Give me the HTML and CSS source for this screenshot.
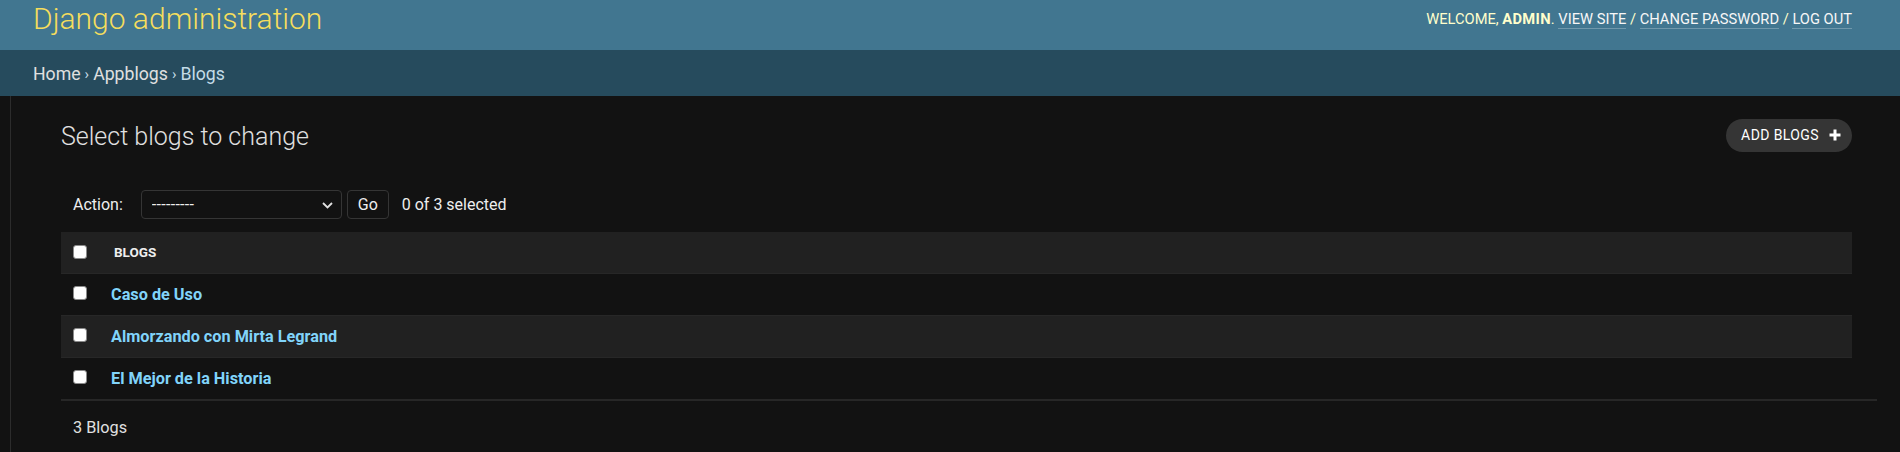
FILE: index.html
```html
<!DOCTYPE html>
<html lang="en">
<head>
<meta charset="utf-8">
<title>Select blogs to change | Django site admin</title>
<link rel="stylesheet" href="styles.css">
</head>
<body>
<header class="site-header">
  <h1 class="branding">Django administration</h1>
  <div class="user-tools">WELCOME, <strong>ADMIN</strong>. <a href="#">VIEW SITE</a> / <a href="#">CHANGE PASSWORD</a> / <a href="#">LOG OUT</a></div>
</header>
<nav class="breadcrumbs"><a href="#">Home</a><span class="sep">›</span><a href="#">Appblogs</a><span class="sep">›</span><span class="current">Blogs</span></nav>
<div class="main">
  <div class="nav-toggle"></div>
  <main class="content">
    <div class="title-row">
      <h1 class="page-title">Select blogs to change</h1>
      <a class="add-link" href="#">ADD BLOGS
        <svg class="plus" width="12" height="12" viewBox="0 0 12 12"><path d="M6 0.5v11M0.5 6h11" stroke="#fff" stroke-width="3"/></svg>
      </a>
    </div>
    <div class="actions">
      <label class="action-label">Action:</label>
      <div class="select-wrap">
        <select class="action-select"><option>---------</option></select>
        <svg class="chevron" width="11" height="7" viewBox="0 0 11 7"><path d="M1 1l4.5 4.5L10 1" fill="none" stroke="#e0e0e0" stroke-width="1.8"/></svg>
      </div>
      <button class="go-btn">Go</button>
      <span class="counter">0 of 3 selected</span>
    </div>
    <table class="result-list">
      <thead>
        <tr><th class="cb-col"><span class="cb"></span></th><th class="col-name">BLOGS</th></tr>
      </thead>
      <tbody>
        <tr><td class="cb-col"><span class="cb"></span></td><th class="row-name"><a href="#">Caso de Uso</a></th></tr>
        <tr class="even"><td class="cb-col"><span class="cb"></span></td><th class="row-name"><a href="#">Almorzando con Mirta Legrand</a></th></tr>
        <tr><td class="cb-col"><span class="cb"></span></td><th class="row-name"><a href="#">El Mejor de la Historia</a></th></tr>
      </tbody>
    </table>
    <p class="paginator">3 Blogs</p>
  </main>
</div>
</body>
</html>
```
FILE: styles.css
```css
* { box-sizing: border-box; }
html, body { margin: 0; padding: 0; }
body {
  background: #121212;
  color: #eeeeee;
  font-family: Roboto, "Liberation Sans", Arial, sans-serif;
  height: 452px;
  overflow: hidden;
}
a { text-decoration: none; }

.site-header {
  height: 50px;
  background: #417690;
  display: flex;
  align-items: center;
  justify-content: space-between;
  padding: 0 48px 13px 33px;
}
.branding {
  margin: 0;
  font-size: 30px;
  font-weight: 300;
  color: #f5dd5d;
  line-height: 36px;
}
.user-tools {
  font-size: 14.7px;
  letter-spacing: 0;
  color: #ffffcc;
  line-height: 18px;
}
.user-tools strong { font-weight: 700; letter-spacing: 0.3px; }
.user-tools a {
  color: #f7f7f7;
  border-bottom: 1px solid rgba(255,255,255,0.25);
}

.breadcrumbs {
  height: 46px;
  background: #264b5d;
  display: flex;
  align-items: center;
  padding: 1px 33px 0;
  font-size: 17.7px;
  color: #c4dce8;
}
.breadcrumbs a { color: #e0e0e0; }
.breadcrumbs .sep { margin: 0 4px; font-size: 15px; }

.main {
  display: flex;
  height: 356px;
}
.nav-toggle {
  width: 11px;
  flex: none;
  border-right: 1px solid #2c2c2c;
}
.content {
  flex: 1;
  padding: 0 23px 0 50px;
}

.title-row {
  display: flex;
  justify-content: space-between;
  align-items: center;
  margin-right: 25px;
  padding-top: 21px;
}
.page-title {
  margin: 0;
  font-size: 25px;
  font-weight: 300;
  color: #e0e0e0;
  line-height: 32px;
  padding-top: 4px;
}
.add-link {
  display: flex;
  align-items: center;
  height: 33px;
  padding: 0 11px 0 15px;
  background: #353535;
  border-radius: 17px;
  color: #ffffff;
  font-size: 14px;
  letter-spacing: 0.4px;
  font-weight: 400;
}
.add-link .plus { margin-left: 10px; }

.actions {
  display: flex;
  align-items: center;
  margin-top: 37px;
  padding-left: 12px;
  margin-right: 25px;
  height: 29px;
  font-size: 16px;
  color: #eeeeee;
}
.action-label { margin-right: 18px; }
.select-wrap {
  position: relative;
  width: 201px;
  height: 29px;
}
.action-select {
  appearance: none;
  -webkit-appearance: none;
  width: 100%;
  height: 100%;
  background: #121212;
  border: 1px solid #353535;
  border-radius: 4px;
  color: #eeeeee;
  font-family: inherit;
  font-size: 16px;
  letter-spacing: 0.3px;
  padding: 0 10px;
}
.chevron {
  position: absolute;
  right: 9px;
  top: 12px;
}
.go-btn {
  margin-left: 5px;
  width: 42px;
  height: 29px;
  background: #121212;
  border: 1px solid #353535;
  border-radius: 4px;
  color: #eeeeee;
  font-family: inherit;
  font-size: 16px;
  padding: 0;
}
.counter { margin-left: 13px; }

.result-list {
  width: calc(100% - 25px);
  border-collapse: collapse;
  margin-top: 13px;
}
.result-list thead th {
  background: #212121;
  height: 41px;
  border-bottom: 1px solid #272727;
  text-align: left;
  font-size: 13.5px;
  font-weight: 700;
  color: #eeeeee;
  vertical-align: middle;
}
.result-list td, .result-list tbody th {
  height: 42px;
  border-bottom: 1px solid #272727;
  vertical-align: middle;
  text-align: left;
}
.result-list tr.even td, .result-list tr.even th { background: #212121; }
.result-list tbody tr:last-child td, .result-list tbody tr:last-child th { border-bottom: none; }
.cb-col { width: 50px; padding: 0 0 0 12px; }
.col-name { padding-left: 0; }
.result-list thead .col-name { padding-left: 3px; }
.row-name { padding: 0; }
.row-name a {
  color: #81d4fa;
  font-size: 16.25px;
  font-weight: 700;
}
.cb {
  display: block;
  width: 14px;
  height: 14px;
  background: #ffffff;
  border: 1px solid #8a8a8a;
  border-radius: 3px;
}
thead .cb { margin-top: 0; }
tbody .cb { margin-top: -2px; }

.paginator {
  margin: 0;
  border-top: 2px solid #272727;
  padding: 3px 12px 0;
  height: 52px;
  display: flex;
  align-items: center;
  font-size: 16.25px;
  color: #e0e0e0;
}
```
